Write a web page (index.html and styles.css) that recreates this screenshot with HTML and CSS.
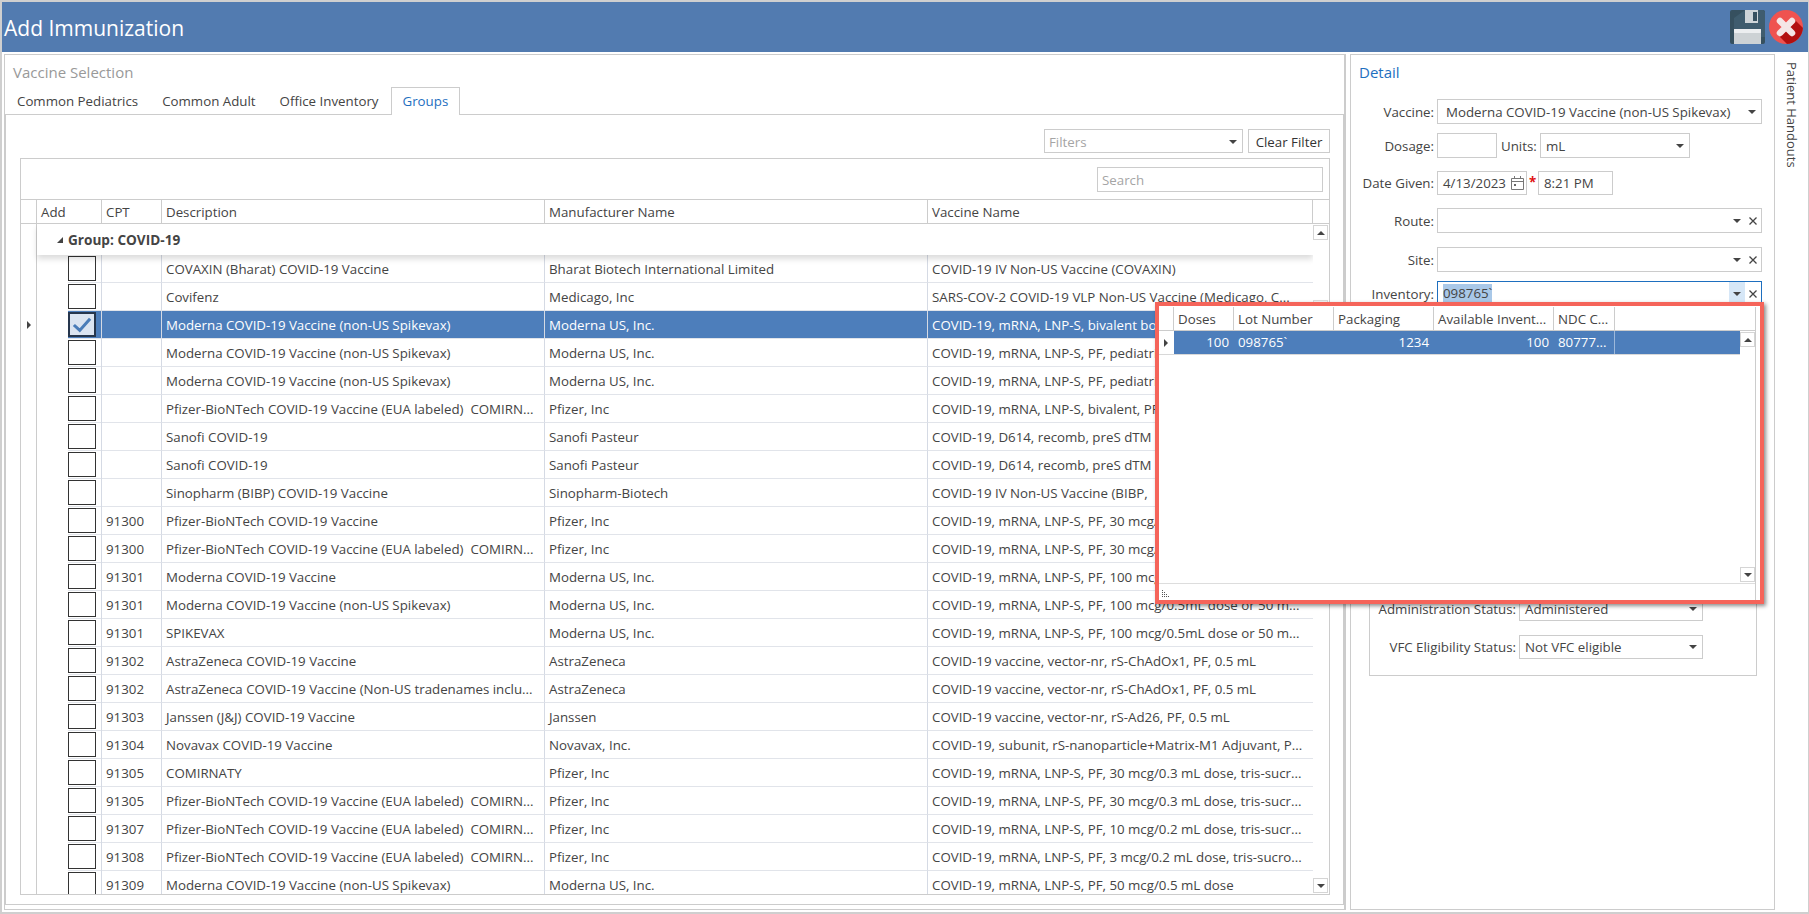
FILE: index.html
```html
<!DOCTYPE html>
<html lang="en">
<head>
<meta charset="utf-8">
<title>Add Immunization</title>
<link rel="stylesheet" href="styles.css">
</head>
<body>
<div class="window">
  <header class="titlebar">
    <h1 class="title">Add Immunization</h1>
    <div class="actions">
      <svg class="save" viewBox="0 0 35 34" width="35" height="34" aria-label="Save">
        <rect width="35" height="34" rx="2" fill="#36505f"/>
        <polygon points="15,0 33,0 35,2 35,27 4,27 4,8" fill="#3f5c6e"/>
        <rect x="15" y="0" width="13" height="13" fill="#ced4d8"/>
        <rect x="23" y="2" width="4" height="9" fill="#36505f"/>
        <rect x="4" y="19" width="27" height="15" fill="#cdd2d5"/>
        <rect x="4" y="19" width="27" height="4" rx="1" fill="#eceef0"/>
      </svg>
      <svg class="close" viewBox="0 0 34 34" width="34" height="34" aria-label="Close">
        <defs><clipPath id="disc"><circle cx="17" cy="17" r="17"/></clipPath></defs>
        <circle cx="17" cy="17" r="17" fill="#ef5350"/>
        <polygon clip-path="url(#disc)" points="24,8 40,24 40,40 24,40 8,24" fill="#b21010"/>
        <path d="M11 11 23 23M23 11 11 23" stroke="#f4e6e6" stroke-width="6.5" stroke-linecap="round"/>
      </svg>
    </div>
  </header>

  <main class="main">
    <section class="left">
      <h2 class="left-title">Vaccine Selection</h2>
      <nav class="tabs">
        <span class="tab">Common Pediatrics</span>
        <span class="tab">Common Adult</span>
        <span class="tab">Office Inventory</span>
        <span class="tab active">Groups</span>
      </nav>
      <div class="pane">
        <div class="filters">
          <div class="combo filter-combo"><span class="muted">Filters</span><i class="arrow"></i></div>
          <div class="btn">Clear Filter</div>
        </div>
        <div class="grid">
          <div class="searchbar"><div class="search">Search</div></div>
          <div class="row head">
            <div class="cell mark"></div>
            <div class="cell">Add</div>
            <div class="cell">CPT</div>
            <div class="cell">Description</div>
            <div class="cell">Manufacturer Name</div>
            <div class="cell">Vaccine Name</div>
            <div class="cell end"></div>
          </div>
          <div class="body">
            <div class="rows">
              <div class="group"><div class="cell mark"></div><div class="group-label"><i class="tri-open"></i>Group: COVID-19</div></div>

              <div class="row item"><div class="cell mark"></div><div class="cell add"><div class="addline"><span class="chk"></span></div></div><div class="cell"></div><div class="cell">COVAXIN (Bharat) COVID-19 Vaccine</div><div class="cell">Bharat Biotech International Limited</div><div class="cell">COVID-19 IV Non-US Vaccine (COVAXIN)</div></div>
              <div class="row item"><div class="cell mark"></div><div class="cell add"><div class="addline"><span class="chk"></span></div></div><div class="cell"></div><div class="cell">Covifenz</div><div class="cell">Medicago, Inc</div><div class="cell">SARS-COV-2 COVID-19 VLP Non-US Vaccine (Medicago, C...</div></div>
              <div class="row item selected"><div class="cell mark"><i class="tri-right"></i></div><div class="cell add"><div class="addline"><span class="chk on"><svg viewBox="0 0 24 20" width="22" height="18"><path d="M3 10 9.5 16 21 3" fill="none" stroke="#4a7cb8" stroke-width="3.4"/></svg></span></div></div><div class="cell"></div><div class="cell">Moderna COVID-19 Vaccine (non-US Spikevax)</div><div class="cell">Moderna US, Inc.</div><div class="cell">COVID-19, mRNA, LNP-S, bivalent booster</div></div>
              <div class="row item"><div class="cell mark"></div><div class="cell add"><div class="addline"><span class="chk"></span></div></div><div class="cell"></div><div class="cell">Moderna COVID-19 Vaccine (non-US Spikevax)</div><div class="cell">Moderna US, Inc.</div><div class="cell">COVID-19, mRNA, LNP-S, PF, pediatric</div></div>
              <div class="row item"><div class="cell mark"></div><div class="cell add"><div class="addline"><span class="chk"></span></div></div><div class="cell"></div><div class="cell">Moderna COVID-19 Vaccine (non-US Spikevax)</div><div class="cell">Moderna US, Inc.</div><div class="cell">COVID-19, mRNA, LNP-S, PF, pediatric</div></div>
              <div class="row item"><div class="cell mark"></div><div class="cell add"><div class="addline"><span class="chk"></span></div></div><div class="cell"></div><div class="cell">Pfizer-BioNTech COVID-19 Vaccine (EUA labeled)  COMIRN...</div><div class="cell">Pfizer, Inc</div><div class="cell">COVID-19, mRNA, LNP-S, bivalent, PF</div></div>
              <div class="row item"><div class="cell mark"></div><div class="cell add"><div class="addline"><span class="chk"></span></div></div><div class="cell"></div><div class="cell">Sanofi COVID-19</div><div class="cell">Sanofi Pasteur</div><div class="cell">COVID-19, D614, recomb, preS dTM</div></div>
              <div class="row item"><div class="cell mark"></div><div class="cell add"><div class="addline"><span class="chk"></span></div></div><div class="cell"></div><div class="cell">Sanofi COVID-19</div><div class="cell">Sanofi Pasteur</div><div class="cell">COVID-19, D614, recomb, preS dTM</div></div>
              <div class="row item"><div class="cell mark"></div><div class="cell add"><div class="addline"><span class="chk"></span></div></div><div class="cell"></div><div class="cell">Sinopharm (BIBP) COVID-19 Vaccine</div><div class="cell">Sinopharm-Biotech</div><div class="cell">COVID-19 IV Non-US Vaccine (BIBP,</div></div>
              <div class="row item"><div class="cell mark"></div><div class="cell add"><div class="addline"><span class="chk"></span></div></div><div class="cell">91300</div><div class="cell">Pfizer-BioNTech COVID-19 Vaccine</div><div class="cell">Pfizer, Inc</div><div class="cell">COVID-19, mRNA, LNP-S, PF, 30 mcg/0.3 mL dose</div></div>
              <div class="row item"><div class="cell mark"></div><div class="cell add"><div class="addline"><span class="chk"></span></div></div><div class="cell">91300</div><div class="cell">Pfizer-BioNTech COVID-19 Vaccine (EUA labeled)  COMIRN...</div><div class="cell">Pfizer, Inc</div><div class="cell">COVID-19, mRNA, LNP-S, PF, 30 mcg/0.3 mL dose</div></div>
              <div class="row item"><div class="cell mark"></div><div class="cell add"><div class="addline"><span class="chk"></span></div></div><div class="cell">91301</div><div class="cell">Moderna COVID-19 Vaccine</div><div class="cell">Moderna US, Inc.</div><div class="cell">COVID-19, mRNA, LNP-S, PF, 100 mcg/0.5mL dose</div></div>
              <div class="row item"><div class="cell mark"></div><div class="cell add"><div class="addline"><span class="chk"></span></div></div><div class="cell">91301</div><div class="cell">Moderna COVID-19 Vaccine (non-US Spikevax)</div><div class="cell">Moderna US, Inc.</div><div class="cell">COVID-19, mRNA, LNP-S, PF, 100 mcg/0.5mL dose or 50 m...</div></div>
              <div class="row item"><div class="cell mark"></div><div class="cell add"><div class="addline"><span class="chk"></span></div></div><div class="cell">91301</div><div class="cell">SPIKEVAX</div><div class="cell">Moderna US, Inc.</div><div class="cell">COVID-19, mRNA, LNP-S, PF, 100 mcg/0.5mL dose or 50 m...</div></div>
              <div class="row item"><div class="cell mark"></div><div class="cell add"><div class="addline"><span class="chk"></span></div></div><div class="cell">91302</div><div class="cell">AstraZeneca COVID-19 Vaccine</div><div class="cell">AstraZeneca</div><div class="cell">COVID-19 vaccine, vector-nr, rS-ChAdOx1, PF, 0.5 mL</div></div>
              <div class="row item"><div class="cell mark"></div><div class="cell add"><div class="addline"><span class="chk"></span></div></div><div class="cell">91302</div><div class="cell">AstraZeneca COVID-19 Vaccine (Non-US tradenames inclu...</div><div class="cell">AstraZeneca</div><div class="cell">COVID-19 vaccine, vector-nr, rS-ChAdOx1, PF, 0.5 mL</div></div>
              <div class="row item"><div class="cell mark"></div><div class="cell add"><div class="addline"><span class="chk"></span></div></div><div class="cell">91303</div><div class="cell">Janssen (J&amp;J) COVID-19 Vaccine</div><div class="cell">Janssen</div><div class="cell">COVID-19 vaccine, vector-nr, rS-Ad26, PF, 0.5 mL</div></div>
              <div class="row item"><div class="cell mark"></div><div class="cell add"><div class="addline"><span class="chk"></span></div></div><div class="cell">91304</div><div class="cell">Novavax COVID-19 Vaccine</div><div class="cell">Novavax, Inc.</div><div class="cell">COVID-19, subunit, rS-nanoparticle+Matrix-M1 Adjuvant, P...</div></div>
              <div class="row item"><div class="cell mark"></div><div class="cell add"><div class="addline"><span class="chk"></span></div></div><div class="cell">91305</div><div class="cell">COMIRNATY</div><div class="cell">Pfizer, Inc</div><div class="cell">COVID-19, mRNA, LNP-S, PF, 30 mcg/0.3 mL dose, tris-sucr...</div></div>
              <div class="row item"><div class="cell mark"></div><div class="cell add"><div class="addline"><span class="chk"></span></div></div><div class="cell">91305</div><div class="cell">Pfizer-BioNTech COVID-19 Vaccine (EUA labeled)  COMIRN...</div><div class="cell">Pfizer, Inc</div><div class="cell">COVID-19, mRNA, LNP-S, PF, 30 mcg/0.3 mL dose, tris-sucr...</div></div>
              <div class="row item"><div class="cell mark"></div><div class="cell add"><div class="addline"><span class="chk"></span></div></div><div class="cell">91307</div><div class="cell">Pfizer-BioNTech COVID-19 Vaccine (EUA labeled)  COMIRN...</div><div class="cell">Pfizer, Inc</div><div class="cell">COVID-19, mRNA, LNP-S, PF, 10 mcg/0.2 mL dose, tris-sucr...</div></div>
              <div class="row item"><div class="cell mark"></div><div class="cell add"><div class="addline"><span class="chk"></span></div></div><div class="cell">91308</div><div class="cell">Pfizer-BioNTech COVID-19 Vaccine (EUA labeled)  COMIRN...</div><div class="cell">Pfizer, Inc</div><div class="cell">COVID-19, mRNA, LNP-S, PF, 3 mcg/0.2 mL dose, tris-sucro...</div></div>
              <div class="row item"><div class="cell mark"></div><div class="cell add"><div class="addline"><span class="chk"></span></div></div><div class="cell">91309</div><div class="cell">Moderna COVID-19 Vaccine (non-US Spikevax)</div><div class="cell">Moderna US, Inc.</div><div class="cell">COVID-19, mRNA, LNP-S, PF, 50 mcg/0.5 mL dose</div></div>
            </div>
            <div class="scroll"><span class="sbtn"><i class="arrow up"></i></span><span class="thumb"></span><span class="sbtn"><i class="arrow"></i></span></div>
          </div>
        </div>
      </div>
    </section>

    <section class="detail">
      <h2 class="detail-title">Detail</h2>
      <div class="form">
        <div class="frow"><label class="lbl">Vaccine:</label><div class="combo wide vac"><span>Moderna COVID-19 Vaccine (non-US Spikevax)</span><i class="arrow"></i></div></div>
        <div class="frow g9"><label class="lbl">Dosage:</label><div class="input dose"></div><label class="units-lbl">Units:</label><div class="combo units"><span>mL</span><i class="arrow"></i></div></div>
        <div class="frow g13 short"><label class="lbl">Date Given:</label><div class="input date"><span>4/13/2023</span><svg class="cal" viewBox="0 0 13 14" width="13" height="14"><path d="M.5 2.5h12v11H.5zM.5 5.5h12M3.5 0v3M9.5 0v3" fill="none" stroke="#777"/><rect x="3" y="8" width="2" height="2" fill="#666"/></svg></div><span class="req">*</span><div class="input time">8:21 PM</div></div>
        <div class="frow g13"><label class="lbl">Route:</label><div class="combo wide clearable"><span></span><span class="cbtn"><i class="arrow"></i></span><span class="xbtn"><svg viewBox="0 0 8 8" width="8" height="8"><path d="M.5.5 7.5 7.5M7.5.5.5 7.5" stroke="#444" stroke-width="1.3"/></svg></span></div></div>
        <div class="frow g14"><label class="lbl">Site:</label><div class="combo wide clearable"><span></span><span class="cbtn"><i class="arrow"></i></span><span class="xbtn"><svg viewBox="0 0 8 8" width="8" height="8"><path d="M.5.5 7.5 7.5M7.5.5.5 7.5" stroke="#444" stroke-width="1.3"/></svg></span></div></div>
        <div class="frow g9"><label class="lbl">Inventory:</label><div class="combo wide clearable focus"><span class="hl">098765`</span><span class="cbtn hot"><i class="arrow"></i></span><span class="xbtn"><svg viewBox="0 0 8 8" width="8" height="8"><path d="M.5.5 7.5 7.5M7.5.5.5 7.5" stroke="#444" stroke-width="1.3"/></svg></span></div></div>
      </div>
      <div class="admin">
        <div class="arow"><label class="lbl2">Administration Status:</label><div class="combo acombo"><span>Administered</span><i class="arrow"></i></div></div>
        <div class="arow"><label class="lbl2">VFC Eligibility Status:</label><div class="combo acombo"><span>Not VFC eligible</span><i class="arrow"></i></div></div>
      </div>
    </section>

    <aside class="rail"><span class="rail-text">Patient Handouts</span></aside>
  </main>

  <div class="popup">
    <div class="pop-inner">
      <div class="prow phead">
        <div class="pc pmark"></div><div class="pc">Doses</div><div class="pc">Lot Number</div><div class="pc">Packaging</div><div class="pc">Available Invent...</div><div class="pc">NDC C...</div>
      </div>
      <div class="pbody">
        <div class="plist">
          <div class="prow pitem">
            <div class="pc pmark"><i class="tri-right"></i></div><div class="pc num">100</div><div class="pc">098765`</div><div class="pc num">1234</div><div class="pc num">100</div><div class="pc">80777...</div>
          </div>
        </div>
        <div class="pscroll"><span class="sbtn"><i class="arrow up"></i></span><span class="sbtn"><i class="arrow"></i></span></div>
      </div>
      <div class="pfoot"><svg class="grip" viewBox="0 0 8 8" width="8" height="8"><path d="M0 1h1v1H0zM0 3h1v1H0zM2 3h1v1H2zM0 5h1v1H0zM2 5h1v1H2zM4 5h1v1H4zM0 7h1v1H0zM2 7h1v1H2zM4 7h1v1H4zM6 7h1v1H6z" fill="#555"/></svg></div>
    </div>
  </div>
</div>
</body>
</html>
```
FILE: styles.css
```css
* { box-sizing: border-box; }
html, body { margin: 0; padding: 0; background: #fff; }
body { font-family: "Open Sans", "Noto Sans", sans-serif; font-size: 13.3px; color: #444; overflow: hidden; }
h1, h2 { margin: 0; font-weight: 400; }

.window { position: relative; width: 1809px; height: 914px; border-style: solid; border-color: #cfcfcf; border-width: 2px 1px 2px 2px; overflow: hidden; background: #fff; }

.titlebar { height: 50px; background: #527bb0; display: flex; align-items: center; justify-content: space-between; padding-left: 2px; }
.title { font-size: 21px; color: #fff; line-height: 1; padding-top: 2px; }
.actions { display: flex; gap: 4px; padding-right: 5px; }
.save, .close { display: block; }

.main { display: flex; height: 860px; padding-top: 2px; padding-left: 2px; }

.left { width: 1342px; height: 856px; border: 1px solid #ccc; border-right-width: 2px; padding: 0 0 4px 0; flex: none; }
.left-title { height: 32px; font-size: 15px; line-height: 34px; color: #999; padding-left: 8px; }
.tabs { display: flex; height: 27px; }
.tab { padding: 0 12px; line-height: 29px; white-space: nowrap; }
.tab.active { color: #1e6fbf; border: 1px solid #ccc; border-bottom: 0; background: #fff; padding: 0 11px; position: relative; height: 28px; z-index: 1; line-height: 27px; }
.pane { height: 791px; border: 1px solid #ccc; padding: 14px 13px 0 14px; }

.filters { display: flex; justify-content: flex-end; gap: 5px; height: 24px; margin-bottom: 5px; }
.combo { display: flex; align-items: center; justify-content: space-between; border: 1px solid #ccc; background: #fff; height: 25px; padding: 0 5px; white-space: nowrap; }
.filter-combo { width: 199px; height: 24px; padding: 1px 5px 0 4px; }
.muted { color: #a5a5a5; }
.btn { width: 82px; height: 24px; border: 1px solid #ccc; color: #333; display: flex; align-items: center; justify-content: center; white-space: nowrap; padding-top: 1px; }
.arrow { display: inline-block; width: 0; height: 0; border-style: solid; border-width: 4px 4px 0; border-color: #444 transparent transparent; flex: none; }
.arrow.up { border-width: 0 4px 4px; border-color: transparent transparent #444; }

.grid { width: 1310px; height: 737px; border: 1px solid #ccc; }
.searchbar { height: 40px; display: flex; justify-content: flex-end; padding: 8px 6px 0 0; }
.search { width: 226px; height: 25px; border: 1px solid #ccc; color: #a5a5a5; padding-left: 4px; line-height: 25px; }

.row { display: grid; grid-template-columns: 16px 65px 60px 383px 383px 385px; }
.head { grid-template-columns: 16px 65px 60px 383px 383px 385px 16px; height: 25px; border-top: 1px solid #ccc; border-bottom: 1px solid #ccc; }
.cell { padding-left: 4px; white-space: pre; overflow: hidden; border-right: 1px solid #d5dae4; line-height: 24px; }
.head .cell { border-right-color: #ccc; line-height: 25px; }
.cell.end { border-right: 0; }
.cell.mark { padding: 0; border-right-color: #ccc; display: flex; align-items: center; justify-content: center; }

.body { display: flex; height: 670px; overflow: hidden; }
.rows { width: 1292px; overflow: hidden; flex: none; }
.group { display: grid; grid-template-columns: 16px 1fr; height: 31px; position: relative; z-index: 1; }
.group-label { font-weight: 700; font-size: 13.6px; padding-left: 20px; line-height: 30px; background: #fff; box-shadow: 0 4px 6px rgba(0, 0, 0, .14); display: flex; align-items: center; gap: 5px; }
.tri-open { width: 0; height: 0; border-style: solid; border-width: 0 0 6px 6px; border-color: transparent transparent #444; }
.tri-right { width: 0; height: 0; border-style: solid; border-width: 4px 0 4px 4px; border-color: transparent transparent transparent #444; }

.item { height: 28px; }
.item .cell { border-bottom: 1px solid #e1e4ea; line-height: 28px; }
.item .cell:last-child { border-right: 0; }
.item .cell.mark { border-bottom: 0; }
.item .cell.add { padding: 0 0 0 31px; border-bottom: 0; }
.addline { height: 28px; border-bottom: 1px solid #e1e4ea; padding-top: 1px; }
.chk { display: flex; align-items: center; justify-content: center; width: 28px; height: 25px; border: 1px solid #333; background: #fff; }
.chk.on { background: #dbe4f1; border-width: 2px; border-color: #26364d; }
.selected .cell, .selected .addline { background: #4d7ebb; color: #fff; }
.selected .cell.mark { background: #fff; }
.selected .cell.add { background: #fff; }

.scroll { width: 16px; display: flex; flex-direction: column; justify-content: space-between; padding: 1px 1px 1px 0; position: relative; z-index: 2; background: #fff; }
.sbtn { width: 15px; height: 15px; border: 1px solid #d5d5d5; background: #fff; display: flex; align-items: center; justify-content: center; }
.thumb { position: absolute; left: 0; top: 76px; width: 15px; height: 200px; border: 1px solid #ddd; background: #f6f6f6; }

.detail { width: 425px; height: 856px; margin-left: 4px; border: 1px solid #ccc; flex: none; }
.detail-title { height: 44px; font-size: 15px; line-height: 34px; color: #1e6fbf; padding-left: 8px; }
.form { display: flex; flex-direction: column; }
.frow { display: flex; align-items: center; height: 25px; }
.frow.short { height: 24px; }
.g9 { margin-top: 9px; }
.g13 { margin-top: 13px; }
.g14 { margin-top: 14px; }
.lbl { width: 83px; margin-right: 3px; text-align: right; white-space: nowrap; flex: none; }
.wide { width: 325px; }
.vac { padding-left: 8px; padding-right: 5px; }
.input { border: 1px solid #ccc; height: 25px; padding-left: 5px; white-space: nowrap; display: flex; align-items: center; }
.dose { width: 60px; }
.units-lbl { width: 43px; padding-left: 4px; white-space: nowrap; }
.units { width: 150px; }
.date { width: 90px; height: 24px; justify-content: space-between; padding-right: 2px; }
.req { color: #e01010; width: 11px; font-weight: 700; text-align: left; padding-left: 2px; line-height: 1; }
.time { width: 75px; height: 24px; }
.clearable { padding: 0 0 0 5px; }
.clearable > span:first-child { flex: 1; }
.cbtn { width: 16px; height: 23px; display: flex; align-items: center; justify-content: center; flex: none; }
.xbtn { width: 16px; height: 23px; display: flex; align-items: center; justify-content: center; flex: none; }
.focus { border-color: #1e6fbf; }
.clearable.focus > .hl { flex: none; background: #a9c8e8; margin-right: auto; line-height: 19px; }
.hot { background: #d6e7f7; }

.admin { width: 388px; height: 176px; margin: 194px 0 0 18px; border: 1px solid #ccc; padding-top: 96px; display: flex; flex-direction: column; gap: 14px; }
.arow { display: flex; align-items: center; height: 24px; }
.lbl2 { width: 146px; margin-right: 3px; text-align: right; white-space: nowrap; flex: none; }
.acombo { width: 184px; height: 24px; }

.rail { width: 33px; flex: none; padding: 8px 0 0 8px; }
.rail-text { writing-mode: vertical-rl; white-space: nowrap; font-size: 13px; }

.popup { position: absolute; left: 1153px; top: 300px; width: 609px; height: 302px; background: #fff; border: 4px solid #f5645a; box-shadow: 2px 2px 4px rgba(0, 0, 0, .45); padding-top: 1px; z-index: 5; }
.pop-inner { width: 597px; height: 293px; border-right: 1px solid #ccc; display: flex; flex-direction: column; }
.prow { display: grid; grid-template-columns: 15px 60px 100px 100px 120px 61px; }
.phead { height: 24px; border-bottom: 1px solid #ccc; }
.pc { padding: 0 4px; border-right: 1px solid #ccc; white-space: nowrap; overflow: hidden; line-height: 25px; }
.pc.pmark { padding: 0; display: flex; align-items: center; justify-content: center; }
.pbody { display: flex; height: 253px; border-bottom: 1px solid #ddd; }
.plist { width: 581px; flex: none; }
.pitem { height: 24px; border-bottom: 1px solid #d8d8d8; background: linear-gradient(to right, #fff 15px, #4d7ebb 15px); color: #fff; }
.pitem .pc { line-height: 23px; border-right-color: transparent; }
.pitem .pc:last-child { border-right-color: #9db8da; }
.pitem .num { text-align: right; }
.pscroll { width: 15px; display: flex; flex-direction: column; justify-content: space-between; padding: 1px 0; }
.pfoot { flex: 1; display: flex; align-items: flex-end; padding: 0 0 3px 3px; }
.grip { display: block; }
```
